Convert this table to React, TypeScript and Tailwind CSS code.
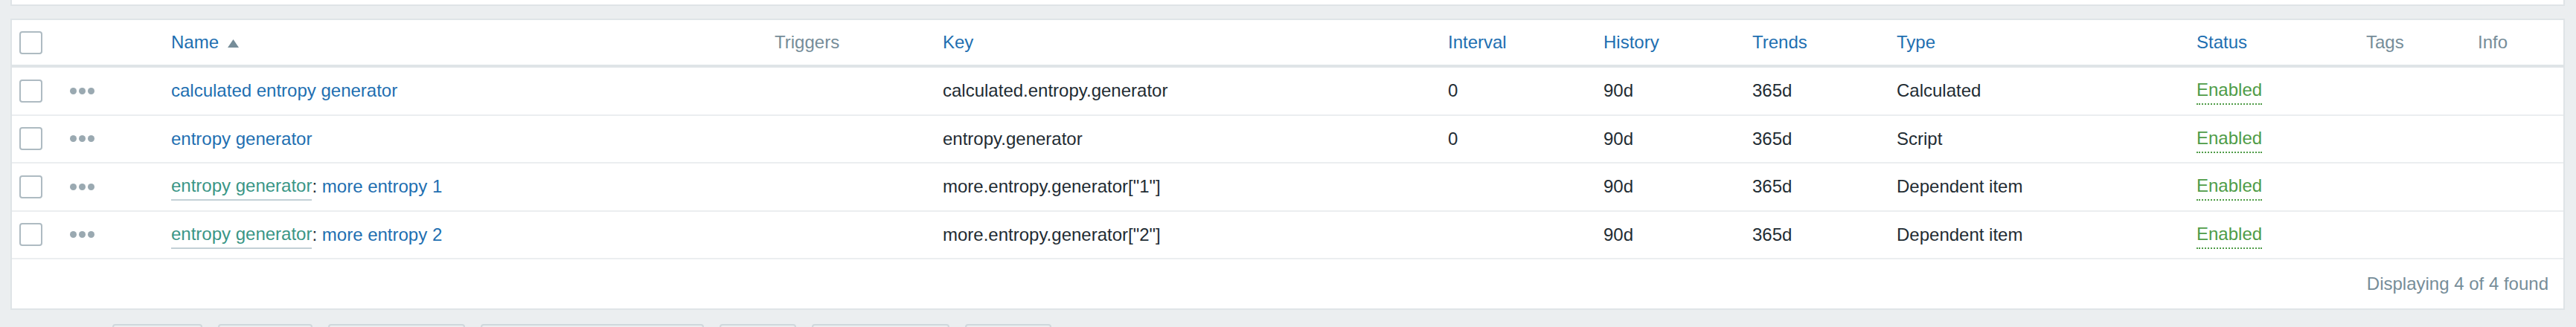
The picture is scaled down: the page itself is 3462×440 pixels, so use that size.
import React from 'react'

type Item = {
  master?: string
  name: string
  key: string
  interval: string
  history: string
  trends: string
  type: string
}

const items: Item[] = [
  { name: 'calculated entropy generator', key: 'calculated.entropy.generator', interval: '0', history: '90d', trends: '365d', type: 'Calculated' },
  { name: 'entropy generator', key: 'entropy.generator', interval: '0', history: '90d', trends: '365d', type: 'Script' },
  { master: 'entropy generator', name: 'more entropy 1', key: 'more.entropy.generator["1"]', interval: '', history: '90d', trends: '365d', type: 'Dependent item' },
  { master: 'entropy generator', name: 'more entropy 2', key: 'more.entropy.generator["2"]', interval: '', history: '90d', trends: '365d', type: 'Dependent item' },
]

const cols = 'grid grid-cols-[68px_136px_811px_226px_679px_209px_200px_194px_403px_228px_150px_1fr]'
const cell = 'flex items-center px-[10px] whitespace-nowrap'

function Checkbox() {
  return <span className="block w-[31px] h-[31px] rounded-[4px] border-2 border-[#aebbc2] bg-white" />
}

function MoreDots() {
  return (
    <span className="flex gap-[3px]">
      <span className="w-[9px] h-[9px] rounded-full bg-[#9aa9b1]" />
      <span className="w-[9px] h-[9px] rounded-full bg-[#9aa9b1]" />
      <span className="w-[9px] h-[9px] rounded-full bg-[#9aa9b1]" />
    </span>
  )
}

function SortUp() {
  return (
    <svg width="15" height="11" viewBox="0 0 15 11" className="ml-[12px] mt-[2px]">
      <polygon points="7.5,0 15,11 0,11" fill="#768d99" />
    </svg>
  )
}

// mass action buttons: only their top edges show in the frame, so labels live in aria-label
const buttons = [
  { label: 'Enable', w: 'w-[121px]' },
  { label: 'Disable', w: 'w-[127px]' },
  { label: 'Execute now', w: 'w-[184px]' },
  { label: 'Clear history and trends', w: 'w-[300px]' },
  { label: 'Copy', w: 'w-[103px]' },
  { label: 'Mass update', w: 'w-[185px]' },
  { label: 'Delete', w: 'w-[116px]' },
]

export default function App() {
  return (
    <div className="min-h-screen bg-[#ebeef0] pl-[14px] pr-[15px] font-['Liberation_Sans',Arial,sans-serif] text-[24px] text-[#1f2c33]">
      {/* filter panel, only its bottom edge shows */}
      <div className="h-[8px] bg-white border-x-2 border-b-2 border-[#dfe4e7]" />

      <div className="mt-[17px] bg-white border-2 border-[#dfe4e7]">
        {/* header */}
        <div className={`${cols} h-[64px] border-b-4 border-[#dfe4e7]`}>
          <div className={cell}><Checkbox /></div>
          <div className={cell} />
          <div className={`${cell} text-[#1e6fb1]`}>Name<SortUp /></div>
          <div className={`${cell} text-[#768d99]`}>Triggers</div>
          <div className={`${cell} text-[#1e6fb1]`}>Key</div>
          <div className={`${cell} text-[#1e6fb1]`}>Interval</div>
          <div className={`${cell} text-[#1e6fb1]`}>History</div>
          <div className={`${cell} text-[#1e6fb1]`}>Trends</div>
          <div className={`${cell} text-[#1e6fb1]`}>Type</div>
          <div className={`${cell} text-[#1e6fb1]`}>Status</div>
          <div className={`${cell} text-[#768d99]`}>Tags</div>
          <div className={`${cell} text-[#768d99]`}>Info</div>
        </div>

        {items.map(it => (
          <div key={it.key} className={`${cols} h-[64.5px] border-b-2 border-[#ebeef0]`}>
            <div className={cell}><Checkbox /></div>
            <div className={cell}><MoreDots /></div>
            <div className={cell}>
              {it.master && (
                <>
                  <span className="text-[#3a9686] border-b-2 border-[#c3d0d6]">{it.master}</span>
                  <span>:&nbsp;</span>
                </>
              )}
              <span className="text-[#1e6fb1]">{it.name}</span>
            </div>
            <div className={cell} />
            <div className={cell}>{it.key}</div>
            <div className={cell}>{it.interval}</div>
            <div className={cell}>{it.history}</div>
            <div className={cell}>{it.trends}</div>
            <div className={cell}>{it.type}</div>
            <div className={cell}>
              <span className="text-[#4f9c47] border-b-2 border-dotted border-[#4f9c47]">Enabled</span>
            </div>
            <div className={cell} />
            <div className={cell} />
          </div>
        ))}

        <div className="flex h-[66px] items-center justify-end pr-[20px] text-[#768d99]">
          Displaying 4 of 4 found
        </div>
      </div>

      {/* mass action bar, runs past the bottom of the frame */}
      <div className="flex items-start gap-[21px] mt-[19px] pl-[137px]">
        {buttons.map(b => (
          <button
            key={b.label}
            aria-label={b.label}
            className={`${b.w} h-[46px] rounded-[4px] border-2 border-[#cfd8dc] bg-[#ebeef0]`}
          />
        ))}
      </div>
    </div>
  )
}
